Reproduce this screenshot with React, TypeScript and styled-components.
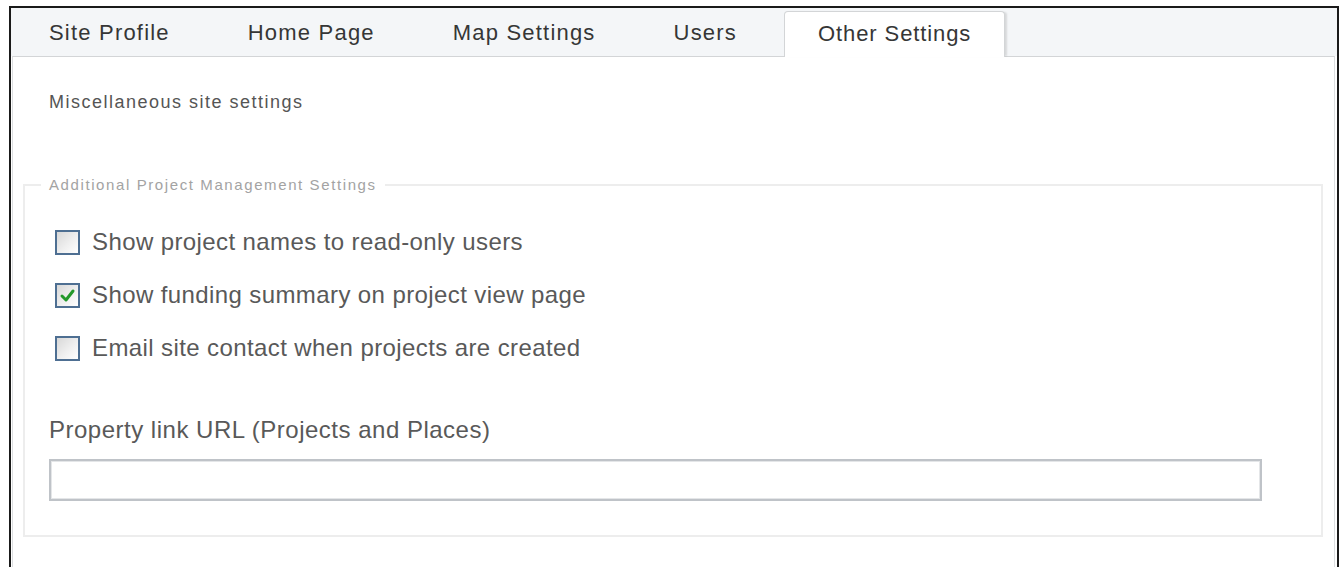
import React from "react";
import styled, { createGlobalStyle } from "styled-components";

const GlobalStyle = createGlobalStyle`
  html, body {
    margin: 0;
    padding: 0;
    background: #ffffff;
    overflow: hidden;
  }
  body {
    font-family: "Liberation Sans", Arial, sans-serif;
  }
`;

const Frame = styled.div`
  box-sizing: border-box;
  width: 1330px;
  min-height: 640px;
  margin: 6px 0 0 9px;
  border: 2px solid #1a1a1a;
  background: #ffffff;
`;

const TabBar = styled.div`
  display: flex;
  align-items: flex-end;
  height: 48px;
  padding-left: 4px;
  background: #f4f6f8;
`;

const Tab = styled.div<{ $active?: boolean }>`
  box-sizing: border-box;
  display: flex;
  align-items: center;
  height: ${({ $active }) => ($active ? "46px" : "45px")};
  padding: 0 ${({ $active }) => ($active ? "33px" : "34px")} 2px;
  margin-right: ${({ $active }) => ($active ? "0" : "10px")};
  margin-left: ${({ $active }) => ($active ? "3px" : "0")};
  margin-bottom: ${({ $active }) => ($active ? "-1px" : "0")};
  font-size: 22px;
  letter-spacing: ${({ $active }) => ($active ? "0.9px" : "1.2px")};
  color: #363636;
  white-space: nowrap;
  cursor: pointer;
  ${({ $active }) =>
    $active &&
    `
    position: relative;
    z-index: 1;
    background: #ffffff;
    border: 1px solid #d3d5d7;
    border-bottom: none;
    border-radius: 4px 4px 0 0;
    box-shadow: 3px 0 2px -1px rgba(0, 0, 0, 0.12);
  `}
`;

const Panel = styled.div`
  margin: 0 2px 0 1px;
  padding: 34px 0 0;
  min-height: 560px;
  border: 1px solid #dcdee0;
  border-top-color: #d3d5d7;
  background: #ffffff;
`;

const Intro = styled.p`
  margin: 0;
  padding-left: 36px;
  font-size: 18px;
  line-height: 22px;
  letter-spacing: 1.5px;
  color: #555555;
`;

const Group = styled.fieldset`
  margin: 63px 11px 0 10px;
  padding: 0;
  border: 2px solid #ededed;
`;

const GroupTitle = styled.legend`
  margin-left: 16px;
  padding: 0 8px;
  font-size: 15px;
  line-height: 17px;
  letter-spacing: 1.6px;
  color: #a3a3a3;
`;

const GroupBody = styled.div`
  display: flex;
  flex-direction: column;
  padding: 36px 24px 34px;
`;

const OptionList = styled.div`
  display: flex;
  flex-direction: column;
  gap: 27px;
  padding-left: 6px;
`;

const Option = styled.label`
  display: flex;
  align-items: center;
  gap: 12px;
  height: 26px;
  cursor: pointer;
`;

const Box = styled.span`
  box-sizing: border-box;
  display: flex;
  align-items: center;
  justify-content: center;
  width: 25px;
  height: 25px;
  border: 2px solid #4e6f92;
  background: linear-gradient(135deg, #d8d8d8 0%, #efefef 55%, #ffffff 100%);
`;

const OptionText = styled.span`
  font-size: 24px;
  line-height: 26px;
  letter-spacing: 0.4px;
  color: #595959;
  white-space: nowrap;
`;

const FieldLabel = styled.div`
  margin-top: 55px;
  font-size: 24px;
  line-height: 28px;
  letter-spacing: 0.5px;
  color: #595959;
`;

const TextInput = styled.input`
  box-sizing: border-box;
  width: 1213px;
  height: 42px;
  margin-top: 15px;
  padding: 0 8px;
  border: 2px solid #bfc3c8;
  box-shadow: inset 0 0 0 1px #e4e6e8;
  font-family: inherit;
  font-size: 20px;
  color: #333333;
  outline: none;
`;

const tabs = ["Site Profile", "Home Page", "Map Settings", "Users", "Other Settings"];

const options = [
  { label: "Show project names to read-only users", checked: false },
  { label: "Show funding summary on project view page", checked: true },
  { label: "Email site contact when projects are created", checked: false },
];

const CheckMark = () => (
  <svg width="17" height="17" viewBox="0 0 17 17">
    <path d="M3 9 L7 13 L14 4" fill="none" stroke="#23982a" strokeWidth="3" strokeLinecap="round" strokeLinejoin="round" />
  </svg>
);

const App = () => {
  return (
    <>
      <GlobalStyle />
      <Frame>
        <TabBar>
          {tabs.map((t) => (
            <Tab key={t} $active={t === "Other Settings"}>
              {t}
            </Tab>
          ))}
        </TabBar>
        <Panel>
          <Intro>Miscellaneous site settings</Intro>
          <Group>
            <GroupTitle>Additional Project Management Settings</GroupTitle>
            <GroupBody>
              <OptionList>
                {options.map((o) => (
                  <Option key={o.label}>
                    <Box>{o.checked && <CheckMark />}</Box>
                    <OptionText>{o.label}</OptionText>
                  </Option>
                ))}
              </OptionList>
              <FieldLabel>Property link URL (Projects and Places)</FieldLabel>
              <TextInput type="text" defaultValue="" />
            </GroupBody>
          </Group>
        </Panel>
      </Frame>
    </>
  );
};

export default App;
